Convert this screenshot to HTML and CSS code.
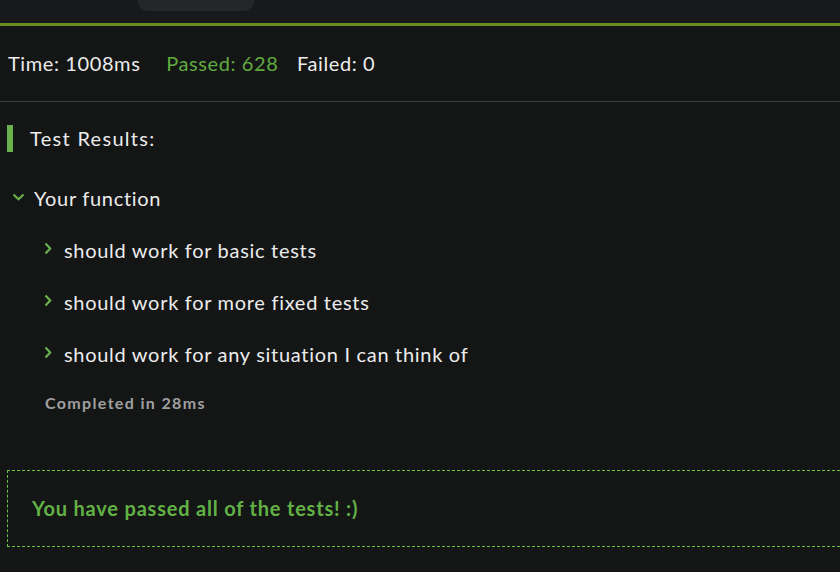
FILE: index.html
```html
<!DOCTYPE html>
<html lang="en">
<head>
<meta charset="utf-8">
<title>Test Results</title>
<link rel="stylesheet" href="styles.css">
</head>
<body>
<div class="topbar"><div class="tab"></div></div>
<div class="accent"></div>
<div class="stats">
  <span class="stat stat-time">Time: 1008ms</span>
  <span class="stat stat-passed">Passed: 628</span>
  <span class="stat stat-failed">Failed: 0</span>
</div>
<div class="results">
  <div class="results-header"><span class="results-bar"></span><span class="results-title">Test Results:</span></div>
  <div class="tree">
    <div class="row row-group">
      <svg class="chev chev-down" width="13" height="8" viewBox="0 0 13 8"><polyline points="1.5,1.5 6.5,6.2 11.5,1.5" fill="none" stroke="#6ab04c" stroke-width="2.2"/></svg>
      <span>Your function</span>
    </div>
    <div class="children">
      <div class="row row-item">
        <svg class="chev chev-right" width="8" height="13" viewBox="0 0 8 13"><polyline points="1.5,1.5 6.2,6.5 1.5,11.5" fill="none" stroke="#6ab04c" stroke-width="2.2"/></svg>
        <span>should work for basic tests</span>
      </div>
      <div class="row row-item">
        <svg class="chev chev-right" width="8" height="13" viewBox="0 0 8 13"><polyline points="1.5,1.5 6.2,6.5 1.5,11.5" fill="none" stroke="#6ab04c" stroke-width="2.2"/></svg>
        <span>should work for more fixed tests</span>
      </div>
      <div class="row row-item">
        <svg class="chev chev-right" width="8" height="13" viewBox="0 0 8 13"><polyline points="1.5,1.5 6.2,6.5 1.5,11.5" fill="none" stroke="#6ab04c" stroke-width="2.2"/></svg>
        <span>should work for any situation I can think of</span>
      </div>
      <div class="completed">Completed in 28ms</div>
    </div>
  </div>
  <div class="passed-box">You have passed all of the tests! :)</div>
</div>
</body>
</html>
```

FILE: styles.css
```css
html, body {
  margin: 0;
  padding: 0;
  background: #141616;
  overflow: hidden;
}
body {
  font-family: Lato, "Open Sans", sans-serif;
  color: #ececec;
  width: 840px;
  height: 572px;
  font-variant-ligatures: none;
}
.topbar {
  height: 23px;
  background: #18191d;
}
.tab {
  margin-left: 138px;
  width: 116px;
  height: 11px;
  background: #25262a;
  border-radius: 0 0 10px 10px;
}
.accent {
  height: 3px;
  background: #6b8e23;
}
.stats {
  padding: 25px 0 26px 8px;
  font-size: 20px;
  line-height: 24px;
  letter-spacing: 0.6px;
  border-bottom: 1px solid #3e3e3e;
  white-space: nowrap;
}
.stat-time { margin-right: 20px; }
.stat-passed { color: #5fab3f; margin-right: 13px; }
.results {
  padding-top: 23px;
}
.results-header {
  display: flex;
  align-items: center;
  height: 27px;
  padding-left: 7px;
}
.results-bar {
  width: 6px;
  height: 27px;
  background: #6ab04c;
  margin-right: 17px;
}
.results-title {
  font-size: 20px;
  letter-spacing: 1.3px;
  margin-top: -2px;
}
.tree {
  margin-top: 21px;
}
.row {
  display: flex;
  align-items: center;
  box-sizing: border-box;
  height: 52px;
  padding-bottom: 2px;
  font-size: 20px;
  letter-spacing: 0.7px;
  white-space: nowrap;
}
.row-group {
  padding-left: 12px;
}
.chev-down {
  margin-right: 9px;
  margin-top: -3px;
}
.row-item {
  padding-left: 44px;
}
.chev-right {
  margin-right: 12px;
  margin-top: -4px;
}
.completed {
  margin-top: 12px;
  margin-left: 45px;
  font-size: 16px;
  line-height: 20px;
  font-weight: bold;
  color: #a0a0a0;
  letter-spacing: 1.35px;
}
.passed-box {
  margin: 57px -20px 0 7px;
  border: 1px dashed #6ac144;
  padding: 25px 0 26px 24px;
  font-size: 20px;
  line-height: 24px;
  font-weight: bold;
  letter-spacing: 0.8px;
  color: #62b145;
  white-space: nowrap;
}
```
